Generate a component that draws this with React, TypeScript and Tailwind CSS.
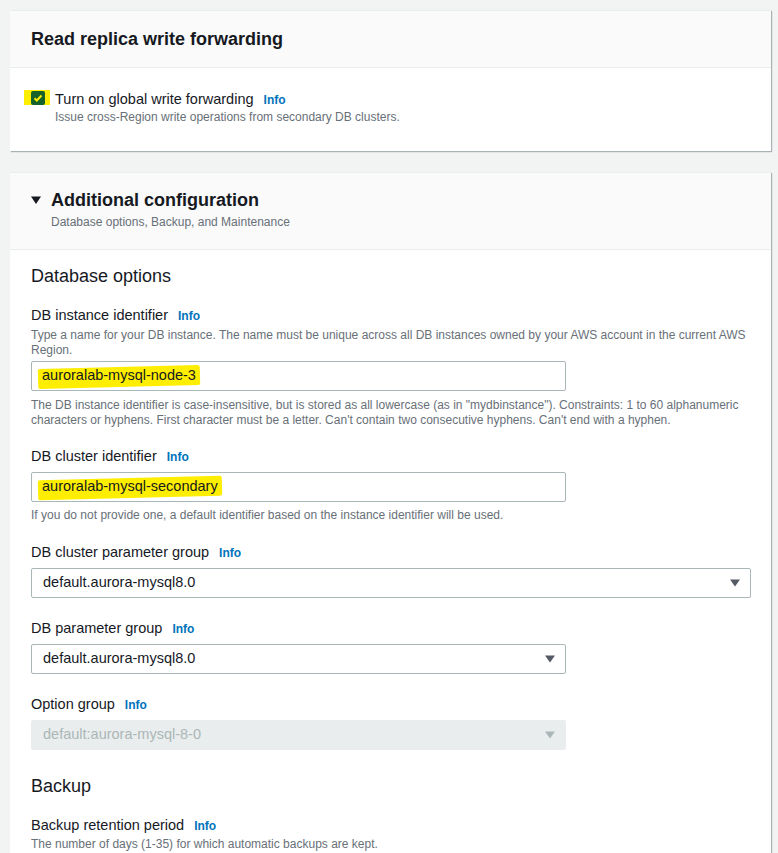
import React from 'react';

const font = { fontFamily: '"Liberation Sans", Arial, sans-serif' };

function Info() {
  return <span className="ml-[10px] text-[12px] font-bold text-[#0073bb]">Info</span>;
}

function Caret({ disabled }: { disabled?: boolean }) {
  return (
    <svg width="12" height="8" viewBox="0 0 12 8" className="shrink-0">
      <path d="M1 0.5h10L6 7.5z" fill={disabled ? '#aab7b8' : '#545b64'} />
    </svg>
  );
}

function Label({ text }: { text: string }) {
  return (
    <div className="flex items-baseline text-[14.5px] leading-[20px] text-[#16191f]">
      <span>{text}</span>
      <Info />
    </div>
  );
}

function Highlight({ children }: { children: React.ReactNode }) {
  return (
    <span className="relative inline-block">
      <span className="absolute -left-[4px] -right-[4px] top-[2px] bottom-[0px] bg-[#ffee00] -rotate-[1.5deg] rounded-[2px]" />
      <span className="relative">{children}</span>
    </span>
  );
}

function TextInput({ value, top = 'mt-[5px]' }: { value: string; top?: string }) {
  return (
    <div className={top + ' h-[30px] w-[535px] flex items-center px-[10px] border border-[#aab7b8] rounded-[2px] bg-white text-[14.5px] text-[#16191f]'}>
      <Highlight>{value}</Highlight>
    </div>
  );
}

function Select({ value, wide, disabled }: { value: string; wide?: boolean; disabled?: boolean }) {
  return (
    <div
      className={
        'mt-[5px] h-[30px] flex items-center justify-between pl-[11px] pr-[9px] rounded-[2px] text-[14.5px] ' +
        (wide ? 'w-full ' : 'w-[535px] ') +
        (disabled ? 'bg-[#eaeded] border border-[#eaeded] text-[#aab7b8]' : 'bg-white border border-[#aab7b8] text-[#16191f]')
      }
    >
      <span>{value}</span>
      <Caret disabled={disabled} />
    </div>
  );
}

function Help({ children, className = '' }: { children: React.ReactNode; className?: string }) {
  return <p className={'text-[12px] leading-[15px] text-[#687078] ' + className}>{children}</p>;
}

export default function App() {
  return (
    <div className="min-h-screen bg-[#f2f3f3] pt-[10px] pl-[10px] pr-[7px]" style={font}>
      {/* Write forwarding */}
      <div className="w-[761px] bg-white border-t border-[#eaeded] shadow-[1px_1px_1px_0_rgba(0,28,36,0.3)]">
        <div className="h-[57px] flex items-center px-[21px] bg-[#fafafa] border-b border-[#eaeded]">
          <h2 className="text-[18px] font-bold text-[#16191f]">Read replica write forwarding</h2>
        </div>
        <div className="pt-[21px] pb-[26px] px-[21px]">
          <div className="flex items-start">
            <div className="relative mt-[2px] w-[14px] h-[14px]">
              <span className="absolute -left-[7px] -top-[1px] w-[26px] h-[15px] bg-[#ffee00]" />
              <span className="absolute inset-0 rounded-[2px] bg-[#14612a] flex items-center justify-center">
                <svg width="10" height="10" viewBox="0 0 10 10">
                  <path d="M1.5 5.2l2.3 2.3 4.7-5" stroke="#ffee00" strokeWidth="2" fill="none" />
                </svg>
              </span>
            </div>
            <div className="ml-[10px]">
              <div className="flex items-baseline text-[14.5px] leading-[20px] text-[#16191f]">
                <span>Turn on global write forwarding</span>
                <Info />
              </div>
              <Help>Issue cross-Region write operations from secondary DB clusters.</Help>
            </div>
          </div>
        </div>
      </div>

      {/* Additional configuration */}
      <div className="mt-[21px] w-[761px] bg-white border-t border-[#eaeded] shadow-[1px_1px_1px_0_rgba(0,28,36,0.3)]">
        <div className="pt-[15px] pb-[19px] px-[21px] bg-[#fafafa] border-b border-[#eaeded]">
          <div className="flex items-center h-[24px]">
            <svg width="10" height="8" viewBox="0 0 10 8" className="mr-[10px]">
              <path d="M0 0.5h10L5 8z" fill="#16191f" />
            </svg>
            <h2 className="text-[18px] font-bold text-[#16191f]">Additional configuration</h2>
          </div>
          <div className="ml-[20px] mt-[3px]">
            <Help>Database options, Backup, and Maintenance</Help>
          </div>
        </div>

        <div className="pt-[14px] pb-[20px] pl-[21px] pr-[20px]">
          <h3 className="text-[18px] leading-[24px] text-[#16191f]">Database options</h3>

          <div className="mt-[17px]">
            <Label text="DB instance identifier" />
            <Help className="mt-[2px]">
              Type a name for your DB instance. The name must be unique across all DB instances owned by your AWS account in the current AWS Region.
            </Help>
            <TextInput value="auroralab-mysql-node-3" top="mt-[3px]" />
            <Help className="mt-[7px]">
              The DB instance identifier is case-insensitive, but is stored as all lowercase (as in "mydbinstance"). Constraints: 1 to 60 alphanumeric characters or hyphens. First character must be a letter. Can't contain two consecutive hyphens. Can't end with a hyphen.
            </Help>
          </div>

          <div className="mt-[18px]">
            <Label text="DB cluster identifier" />
            <TextInput value="auroralab-mysql-secondary" />
            <Help className="mt-[6px]">If you do not provide one, a default identifier based on the instance identifier will be used.</Help>
          </div>

          <div className="mt-[19px]">
            <Label text="DB cluster parameter group" />
            <Select value="default.aurora-mysql8.0" wide />
          </div>

          <div className="mt-[20px]">
            <Label text="DB parameter group" />
            <Select value="default.aurora-mysql8.0" />
          </div>

          <div className="mt-[20px]">
            <Label text="Option group" />
            <Select value="default:aurora-mysql-8-0" disabled />
          </div>

          <h3 className="mt-[24px] text-[18px] leading-[24px] text-[#16191f]">Backup</h3>

          <div className="mt-[17px]">
            <Label text="Backup retention period" />
            <Help className="mt-[1px]">The number of days (1-35) for which automatic backups are kept.</Help>
          </div>
        </div>
      </div>
    </div>
  );
}
